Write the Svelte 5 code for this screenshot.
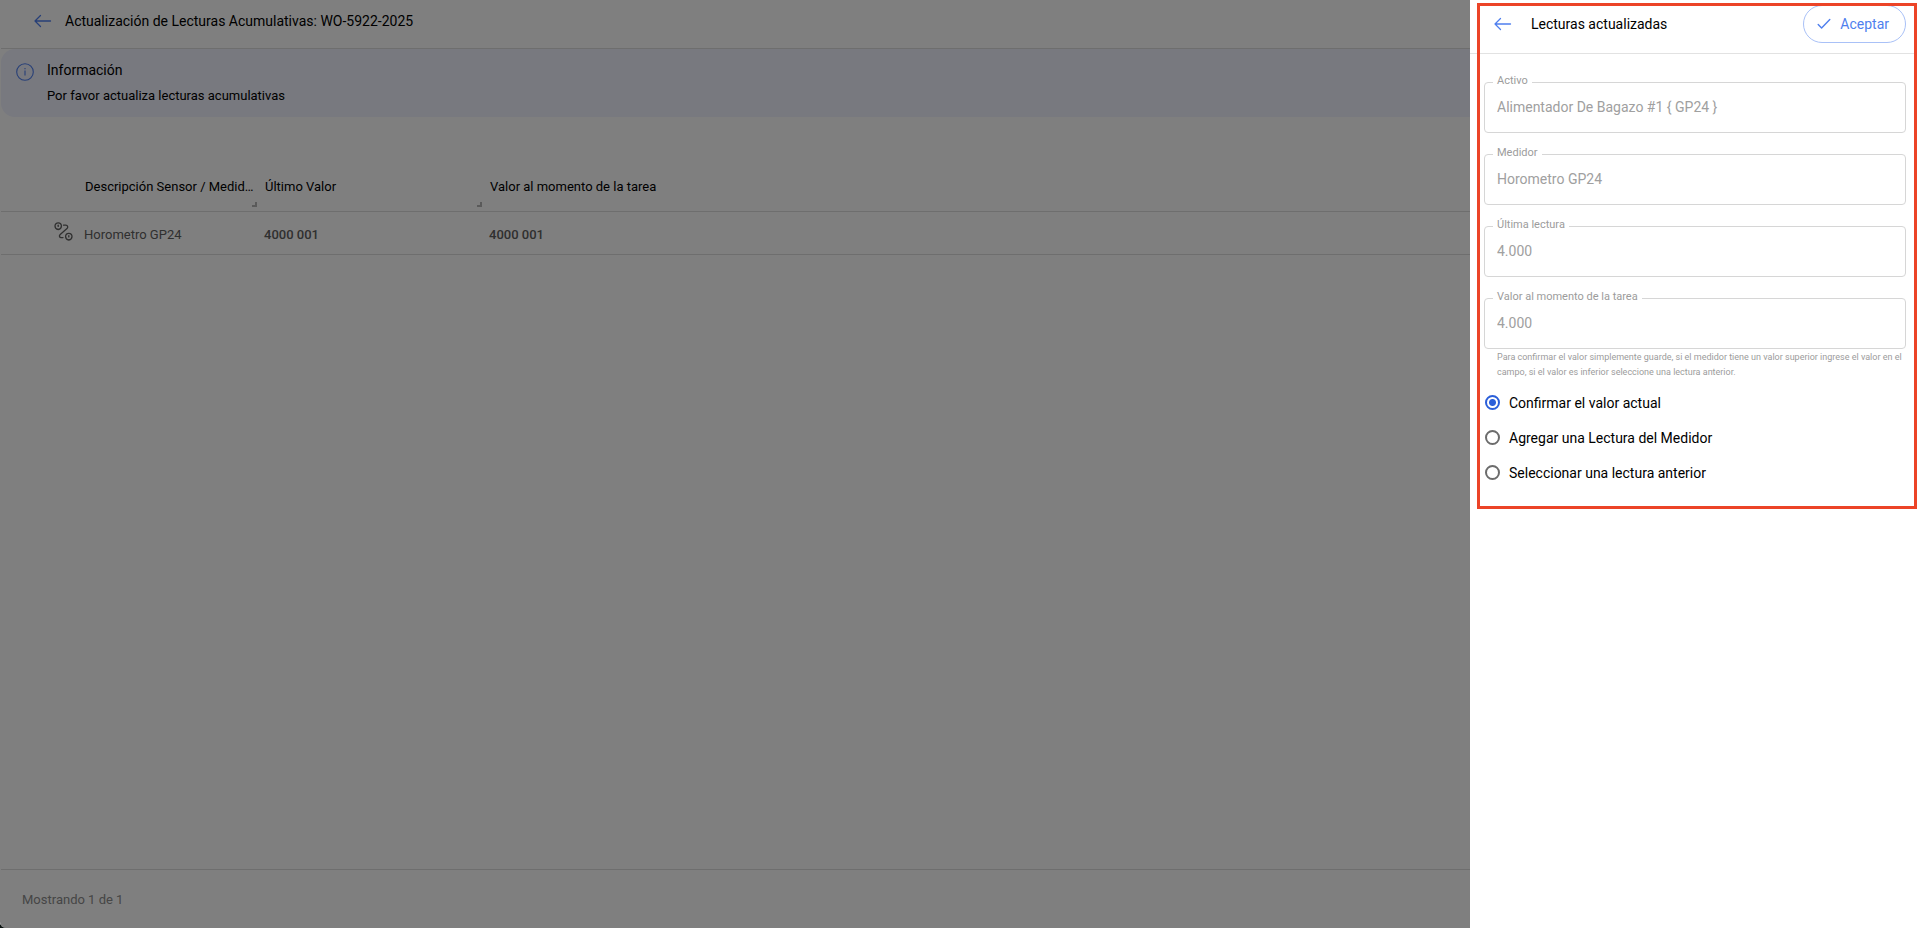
<script lang="ts">
  // ========== Tipos ==========

  interface Reading {
    id: number;
    sensor: string;
    lastValue: string;
    taskValue: string;
  }

  interface Field {
    id: string;
    label: string;
    value: string;
    hint?: string;
  }

  // ========== Datos ==========

  const workOrder = 'WO-5922-2025';

  const readings: Reading[] = [
    { id: 1, sensor: 'Horometro GP24', lastValue: '4000 001', taskValue: '4000 001' },
  ];

  const fields: Field[] = [
    { id: 'asset', label: 'Activo', value: 'Alimentador De Bagazo #1 { GP24 }' },
    { id: 'meter', label: 'Medidor', value: 'Horometro GP24' },
    { id: 'last', label: 'Última lectura', value: '4.000' },
    {
      id: 'task',
      label: 'Valor al momento de la tarea',
      value: '4.000',
      hint: 'Para confirmar el valor simplemente guarde, si el medidor tiene un valor superior ingrese el valor en el campo, si el valor es inferior seleccione una lectura anterior.',
    },
  ];

  const options = [
    { value: 'confirm', label: 'Confirmar el valor actual' },
    { value: 'add', label: 'Agregar una Lectura del Medidor' },
    { value: 'previous', label: 'Seleccionar una lectura anterior' },
  ];

  let selected = $state('confirm');
</script>

{#snippet arrow()}
  <svg width="18" height="14" viewBox="0 0 18 14" fill="none" stroke="currentColor" stroke-width="1.3" stroke-linecap="round" stroke-linejoin="round" aria-hidden="true">
    <path d="M6.5 1.5 1 7l5.5 5.500M1 7h15.5" />
  </svg>
{/snippet}

<div class="page">
  <main>
    <header class="topbar">
      <button class="back" aria-label="Volver">{@render arrow()}</button>
      <h1>Actualización de Lecturas Acumulativas: {workOrder}</h1>
    </header>

    <section class="info">
      <svg width="18" height="18" viewBox="0 0 18 18" fill="none" stroke="currentColor" stroke-width="1.1" aria-hidden="true">
        <circle cx="9" cy="9" r="8.3" />
        <path d="M9 7.6v5M9 5v1.3" />
      </svg>
      <div>
        <h2>Información</h2>
        <p>Por favor actualiza lecturas acumulativas</p>
      </div>
    </section>

    <table>
      <colgroup>
        <col class="col-icon" />
        <col class="col-sensor" />
        <col class="col-last" />
        <col />
      </colgroup>
      <thead>
        <tr>
          <th></th>
          <th>Descripción Sensor / Medidor<span class="grip"></span></th>
          <th>Último Valor<span class="grip"></span></th>
          <th>Valor al momento de la tarea</th>
        </tr>
      </thead>
      <tbody>
        {#each readings as row (row.id)}
          <tr>
            <td class="icon">
              <svg width="19" height="19" viewBox="0 0 19 19" fill="none" stroke="currentColor" stroke-width="1.3" stroke-linecap="round" aria-hidden="true">
                <path d="M4.2 7.5C2.3 7.2 1 5.8 1 4a3.2 3.2 0 0 1 6.4 0c0 1.800-1.300 3.200-3.200 3.500Z" />
                <path d="M4.2 3.200v1.200" />
                <path d="M14.800 18c-1.900-.3-3.200-1.700-3.200-3.500a3.200 3.200 0 0 1 6.400 0c0 1.800-1.300 3.200-3.200 3.500Z" />
                <path d="M14.800 13.700v1.200" />
                <path d="M9.500 3.200h2.300c2 0 2.500 2.200 1.200 3.300L6.200 12.400c-1.400 1.200-.8 3.200 1 3.200h1.800" />
              </svg>
            </td>
            <td>{row.sensor}</td>
            <td class="value">{row.lastValue}</td>
            <td class="value">{row.taskValue}</td>
          </tr>
        {/each}
      </tbody>
    </table>

    <footer>Mostrando {readings.length} de {readings.length}</footer>
  </main>

  <div class="backdrop"></div>

  <aside>
    <header class="drawer-bar">
      <button class="back" aria-label="Volver">{@render arrow()}</button>
      <h2>Lecturas actualizadas</h2>
      <button class="accept">
        <svg width="14" height="12" viewBox="0 0 14 12" fill="none" stroke="currentColor" stroke-width="1.4" stroke-linecap="round" stroke-linejoin="round" aria-hidden="true">
          <path d="M1.2 6.5 4.6 10l8.200-8.500" />
        </svg>
        Aceptar
      </button>
    </header>

    <form>
      {#each fields as field (field.id)}
        <div class="field">
          <label for={field.id}>{field.label}</label>
          <input id={field.id} type="text" value={field.value} disabled />
          {#if field.hint}
            <p class="hint">{field.hint}</p>
          {/if}
        </div>
      {/each}

      <div class="options" role="radiogroup" aria-label="Lectura">
        {#each options as opt (opt.value)}
          <label class="option">
            <input type="radio" name="reading" value={opt.value} bind:group={selected} />
            {opt.label}
          </label>
        {/each}
      </div>
    </form>

    <div class="highlight"></div>
  </aside>
</div>

<style>
  :global(body) {
    margin: 0;
    background: #0c1412;
  }

  .page {
    position: relative;
    min-height: 100vh;
    font-family: Roboto, 'Liberation Sans', sans-serif;
    font-size: 13px;
    color: #000;
    overflow: hidden;
    border-bottom-left-radius: 6px;
  }

  h1,
  h2,
  p {
    margin: 0;
    font-weight: 400;
  }

  button {
    font-family: inherit;
    cursor: pointer;
  }

  /* ========== Página principal ========== */

  main {
    display: flex;
    flex-direction: column;
    min-height: 100vh;
    box-sizing: border-box;
    border-left: 1px solid #fff;
    background: #fff;
  }

  .topbar {
    display: flex;
    align-items: center;
    gap: 13px;
    height: 49px;
    padding: 0 33px 6px;
    box-sizing: border-box;
    border-bottom: 1px solid #dcdcdc;
  }

  h1 {
    font-size: 14px;
  }

  .back {
    display: flex;
    padding: 0;
    border: none;
    background: none;
    color: #4f7fee;
  }

  .info {
    display: flex;
    gap: 13px;
    padding: 11px 15px;
    border-radius: 14px;
    background: #f0f2ff;
  }

  .info svg {
    margin-top: 3px;
    color: #4f7fee;
  }

  .info h2 {
    font-size: 14px;
    line-height: 20px;
  }

  .info p {
    margin-top: 6px;
    line-height: 20px;
  }

  /* ========== Tabla ========== */

  table {
    width: 100%;
    margin-top: 43px;
    table-layout: fixed;
    border-collapse: collapse;
  }

  .col-icon {
    width: 76px;
  }

  .col-sensor {
    width: 180px;
  }

  .col-last {
    width: 225px;
  }

  th {
    position: relative;
    height: 49px;
    padding: 2px 2px 0 8px;
    border-bottom: 1px solid #dcdcdc;
    font-weight: 400;
    text-align: left;
    white-space: nowrap;
    overflow: hidden;
    text-overflow: ellipsis;
  }

  /* Esquina para redimensionar la columna */
  .grip {
    position: absolute;
    right: 0;
    bottom: 4px;
    width: 3px;
    height: 3px;
    border-right: 2px solid #b4b4b4;
    border-bottom: 2px solid #b4b4b4;
  }

  td {
    height: 39px;
    padding: 3px 7px 0;
    border-bottom: 1px solid #dcdcdc;
    color: #606060;
  }

  .icon {
    padding: 3px 4px 0 0;
    text-align: right;
  }

  .icon svg {
    margin-bottom: 6px;
    vertical-align: middle;
  }

  .value {
    font-weight: 500;
  }

  footer {
    display: flex;
    align-items: center;
    height: 58px;
    margin-top: auto;
    padding: 0 21px;
    border-top: 1px solid #dcdcdc;
    color: #8c8c8c;
  }

  .backdrop {
    position: absolute;
    inset: 0;
    background: rgba(0, 0, 0, 0.5);
  }

  /* ========== Panel lateral ========== */

  aside {
    position: absolute;
    top: 0;
    right: 0;
    bottom: 0;
    width: 447px;
    background: #fff;
  }

  .drawer-bar {
    display: flex;
    align-items: center;
    gap: 19px;
    padding: 5px 11px 10px 24px;
    border-bottom: 1px solid #e2e2e2;
  }

  .drawer-bar h2 {
    flex: 1;
    font-size: 14px;
  }

  .accept {
    display: flex;
    align-items: center;
    gap: 9px;
    height: 38px;
    padding: 0 16px 0 13px;
    border: 1px solid #a9c1f7;
    border-radius: 19px;
    background: #fff;
    color: #4f7fee;
    font-size: 14px;
  }

  form {
    display: flex;
    flex-direction: column;
    gap: 21px;
    padding: 28px 11px 0 14px;
  }

  .field {
    position: relative;
  }

  /* Etiqueta flotante sobre el borde del campo */
  .field label {
    position: absolute;
    top: -8px;
    left: 9px;
    padding: 0 4px;
    background: #fff;
    color: #9c9c9c;
    font-size: 11px;
    line-height: 14px;
  }

  .field input {
    display: block;
    width: 100%;
    height: 51px;
    box-sizing: border-box;
    padding: 0 12px 2px;
    border: 1px solid #d6d6d6;
    border-radius: 4px;
    background: #fff;
    color: #a0a0a0;
    font-family: inherit;
    font-size: 14px;
  }

  .hint {
    margin: 1px 0 0 13px;
    color: #9c9c9c;
    font-size: 9px;
    line-height: 15px;
  }

  .options {
    display: flex;
    flex-direction: column;
    margin-top: -16px;
  }

  .option {
    display: flex;
    align-items: center;
    gap: 9px;
    height: 35px;
    font-size: 14px;
  }

  .option input {
    appearance: none;
    width: 15px;
    height: 15px;
    margin: 0 0 0 1px;
    border: 2px solid #6c6c6c;
    border-radius: 50%;
    background: #fff;
  }

  .option input:checked {
    border-color: #2b5fd9;
    background: radial-gradient(circle, #2b5fd9 3px, #fff 4px);
  }

  /* Recuadro rojo sobre la zona del formulario */
  .highlight {
    position: absolute;
    top: 3px;
    left: 7px;
    right: 0;
    height: 500px;
    border: 3px solid #ec4428;
    pointer-events: none;
  }
</style>
